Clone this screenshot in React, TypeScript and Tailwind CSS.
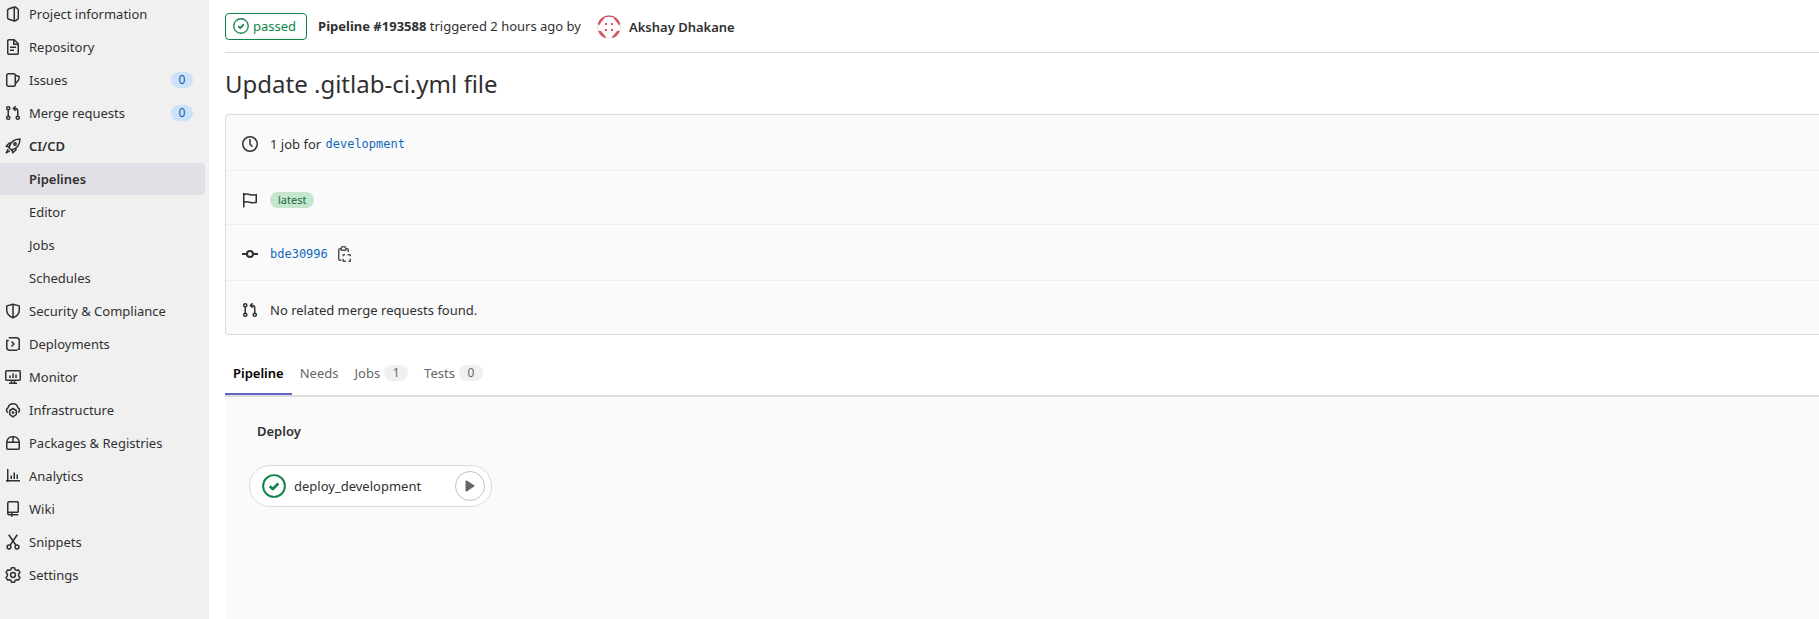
import type { ReactNode } from "react";

function Icon({ children, className = "size-4" }: { children: ReactNode; className?: string }) {
  return (
    <svg
      viewBox="0 0 16 16"
      className={`${className} shrink-0`}
      fill="none"
      stroke="currentColor"
      strokeWidth="1.5"
      strokeLinejoin="round"
      aria-hidden="true"
    >
      {children}
    </svg>
  );
}

const icons = {
  project: (
    <>
      <path d="M9.25 1v14L4 13.300a2 2 0 0 1-1.400-1.900V4.600A2 2 0 0 1 4 2.700Z" />
      <path d="M9.250 1.250h1.250l2 1.300a1.800 1.800 0 0 1 .8 1.500v7.900a1.800 1.800 0 0 1-.8 1.500l-2 1.300H9.250" />
    </>
  ),
  doc: (
    <>
      <path d="M2.75 1.75A1 1 0 0 1 3.75.75h5.5l4 4v9.5a1 1 0 0 1-1 1h-8.5a1 1 0 0 1-1-1Z" />
      <path d="M8.75 1v4.25H13M5 8.25h6M5 11.25h4" />
    </>
  ),
  issues: (
    <>
      <rect x="1.75" y="1.75" width="8.5" height="12.5" rx="1.5" />
      <path d="M10.500 3.300l3 .9a1 1 0 0 1 .7 1.200l-.7 2.600-3.100 3.800" />
    </>
  ),
  merge: (
    <>
      <circle cx="3.25" cy="3.25" r="1.6" />
      <circle cx="3.25" cy="12.75" r="1.6" />
      <circle cx="12.75" cy="12.75" r="1.6" />
      <path d="M3.250 4.750v6.500M12.750 11.250V6a2.500 2.500 0 0 0-2.500-2.500h-1.500M10.600 1.200 8.300 3.500l2.300 2.300" />
    </>
  ),
  rocket: (
    <>
      <path d="M5.2 10.800 4 9.600C5 5 8.500 1.200 15 1c-.2 6.500-4 10-8.600 11Z" />
      <circle cx="10" cy="6" r="1.200" />
      <path d="M5.600 5H4.300L1.200 8.200l3 .8M11 10.400v1.300L7.800 14.800l-.8-3M3.200 11.200l-2 3.600 3.600-2" />
    </>
  ),
  shield: <path d="M1.750 2.900 8 1.200l6.250 1.700v4.600c0 3.200-2.500 5.700-6.250 7.400-3.750-1.700-6.250-4.200-6.250-7.400ZM8 1.200v13.700" />,
  deployments: (
    <>
      <path d="M3.750 1.750h7.500a3 3 0 0 1 3 3v8.500H12.500M12.250 14.250h-7.500a3 3 0 0 1-3-3V4.500h2" />
      <path d="M6.500 5.500 9 8l-2.500 2.500" />
    </>
  ),
  monitor: (
    <>
      <rect x=".75" y="1.750" width="14.500" height="9.500" rx="1" />
      <path d="M5 6.500V9M8 4.500V9M11 5.500V9M6.500 11.500v3M9.500 11.500v3M4 14.250h8" />
    </>
  ),
  infrastructure: (
    <>
      <path d="M3 10.600a2.700 2.700 0 0 1 .1-4.900A5 5 0 0 1 12.900 5.700a2.700 2.700 0 0 1 .1 4.900" />
      <path d="m8 6.500 3.300 2v4L8 14.900l-3.300-2.400v-4Z" />
      <circle cx="8" cy="10.600" r=".6" />
    </>
  ),
  packages: (
    <path d="M1.750 7.250h12.500v6a1 1 0 0 1-1 1H2.750a1 1 0 0 1-1-1ZM1.750 7.250C2 4 4.500 1.750 7 1.750h2c2.500 0 5 2.250 5.250 5.500M8 1.750v5.500" />
  ),
  analytics: <path d="M2.750 1v13M1 12.750h14M6.250 7.500v3.500M9.250 4.500V11M12.250 6.500V11" />,
  wiki: (
    <path d="M13.250 11.250V1.750a1 1 0 0 0-1-1h-8a1.500 1.500 0 0 0-1.500 1.500v10a1.500 1.500 0 0 0 1.500 1.500h9M2.750 12.250a1.500 1.500 0 0 1 1.500-1h9M6.750 11.250v4.500" />
  ),
  snippets: (
    <>
      <path d="M3.700.7 10.800 11M12.300.7 5.200 11" />
      <circle cx="4" cy="13" r="1.900" />
      <circle cx="12" cy="13" r="1.900" />
    </>
  ),
  settings: (
    <>
      <path d="M6.500.75h3l.6 1.900 1.300.7 2-.4 1.500 2.500-1.300 1.700v1.700l1.300 1.700-1.500 2.500-2-.4-1.300.7-.6 1.900h-3l-.6-1.900-1.300-.7-2 .4-1.500-2.500 1.300-1.700V7.150L1.100 5.450l1.500-2.500 2 .4 1.300-.7Z" />
      <circle cx="8" cy="8" r="2.400" />
    </>
  ),
  clock: (
    <>
      <circle cx="8" cy="8" r="7.250" />
      <path d="M8 3.500V8l2 2.200" strokeLinecap="round" />
    </>
  ),
  flag: <path d="M1.750 1v14.500M1.750 2.500C6 .5 9 4.500 14.250 2.600v7.600C9 12.200 6 8.200 1.750 10.200" />,
  commit: (
    <g strokeWidth="2">
      <circle cx="8" cy="8" r="3" />
      <path d="M0 8h5M11 8h5" />
    </g>
  ),
  copy: (
    <>
      <path d="M5.250 2.750h-1.500a1 1 0 0 0-1 1v9.500a1 1 0 0 0 1 1H5.500M9.750 2.750h1.500a1 1 0 0 1 1 1V6M5.250 4.250V2.500a2.250 2 0 0 1 4.500 0v1.750Z" />
      <path d="M7.250 10.250v-1.500H9M11.500 8.750h2.750v1.500M14.250 12.750v2.500H12.500M10 15.250H7.250v-2.500" />
    </>
  ),
  check: (
    <>
      <circle cx="8" cy="8" r="7.250" strokeWidth="1.300" />
      <path d="m5.200 8.100 2 1.900 3.700-3.700" strokeWidth="1.800" />
    </>
  ),
};

type NavItem = { label: string; icon?: ReactNode; count?: number; state?: "open" | "current" };

const navItems: NavItem[] = [
  { label: "Project information", icon: icons.project },
  { label: "Repository", icon: icons.doc },
  { label: "Issues", icon: icons.issues, count: 0 },
  { label: "Merge requests", icon: icons.merge, count: 0 },
  { label: "CI/CD", icon: icons.rocket, state: "open" },
  { label: "Pipelines", state: "current" },
  { label: "Editor" },
  { label: "Jobs" },
  { label: "Schedules" },
  { label: "Security & Compliance", icon: icons.shield },
  { label: "Deployments", icon: icons.deployments },
  { label: "Monitor", icon: icons.monitor },
  { label: "Infrastructure", icon: icons.infrastructure },
  { label: "Packages & Registries", icon: icons.packages },
  { label: "Analytics", icon: icons.analytics },
  { label: "Wiki", icon: icons.wiki },
  { label: "Snippets", icon: icons.snippets },
  { label: "Settings", icon: icons.settings },
];

function Sidebar() {
  return (
    <nav aria-label="Project" className="w-[209px] shrink-0 bg-[#f0f0f0] pr-1">
      <ul className="-mt-0.5 flex flex-col gap-px">
        {navItems.map((item) => (
          <li key={item.label}>
            <a
              href="#"
              aria-current={item.state === "current" ? "page" : undefined}
              className={`flex h-8 items-center rounded-r pr-3 pl-[5px] ${
                item.state === "current" ? "bg-[#e1e0e6]" : ""
              } ${item.state ? "font-semibold" : ""}`}
            >
              <span className="mr-2 flex size-4 shrink-0">{item.icon && <Icon>{item.icon}</Icon>}</span>
              <span className="grow whitespace-nowrap">{item.label}</span>
              {item.count !== undefined && (
                <span className="flex h-4 w-[22px] items-center justify-center rounded-full bg-[#cbe2f9] text-xs text-[#0b5cad]">
                  {item.count}
                </span>
              )}
            </a>
          </li>
        ))}
      </ul>
    </nav>
  );
}

function Avatar() {
  return (
    <svg viewBox="0 0 24 24" className="size-6 shrink-0" aria-hidden="true">
      <clipPath id="avatar-clip">
        <circle cx="12" cy="12" r="11.500" />
      </clipPath>
      <g clipPath="url(#avatar-clip)" fill="#e05260">
        <rect width="24" height="24" fill="#fff" />
        <path d="M5 0h14l-2 2.500-5-.8-5 .8ZM0 8l1-4 4-3 3 1.500L4 7.500l-2 3ZM24 8l-1-4-4-3-3 1.500 4 5 2 3ZM0 15.500l4 .5 5 6-1 2H3ZM24 15.500l-4 .5-5 6 1 2h5Z" />
        <path d="M8 8h2v2H8zM14 8h2v2h-2zM8 14h2v2H8zM14 14h2v2h-2z" />
      </g>
      <circle cx="12" cy="12" r="11.500" fill="none" stroke="#000" strokeOpacity=".1" />
    </svg>
  );
}

function InfoRow({ icon, className, children }: { icon: ReactNode; className: string; children: ReactNode }) {
  return (
    <div className={`flex items-center border-[#f0f0f0] pl-4 ${className}`}>
      <Icon>{icon}</Icon>
      <div className="ml-3 flex items-center">{children}</div>
    </div>
  );
}

const tabs = [
  { label: "Pipeline", selected: true },
  { label: "Needs" },
  { label: "Jobs", count: 1 },
  { label: "Tests", count: 0 },
];

export default function App() {
  return (
    <div className="flex min-h-screen bg-white font-['Noto_Sans','Open_Sans',sans-serif] text-[13px] leading-5 text-[#303030]">
      <Sidebar />
      <main className="flex min-w-0 grow flex-col pl-4">
        <header className="flex h-[53px] items-center border-b border-[#dbdbdb]">
          <a
            href="#"
            className="flex h-[27px] items-center gap-1 rounded border border-[#108548] pr-[10px] pl-[7px] text-[#108548]"
          >
            <Icon>{icons.check}</Icon>
            passed
          </a>
          <p className="ml-[11px] whitespace-nowrap">
            <strong className="font-bold">Pipeline #193588</strong> triggered 2 hours ago by
          </p>
          <a href="#" className="ml-4 flex items-center gap-2 pt-0.5 font-semibold whitespace-nowrap">
            <Avatar />
            Akshay Dhakane
          </a>
        </header>

        <h1 className="mt-4 text-2xl leading-[30px]">Update .gitlab-ci.yml file</h1>

        <section className="mt-[15px] rounded-l border border-r-0 border-[#dbdbdb] bg-[#fafafa]">
          <InfoRow icon={icons.clock} className="h-14 border-b pt-0.5">
            1 job for&nbsp;
            <a href="#" className="ml-px font-['DejaVu_Sans_Mono',monospace] text-xs text-[#1068bf]">
              development
            </a>
          </InfoRow>
          <InfoRow icon={icons.flag} className="h-[54px] border-b pt-1">
            <span className="flex h-4 items-center rounded-full bg-[#c3e6cd] px-2 text-[11px] text-[#24663b]">latest</span>
          </InfoRow>
          <InfoRow icon={icons.commit} className="h-14 border-b pt-0.5">
            <a href="#" className="font-['DejaVu_Sans_Mono',monospace] text-xs text-[#1068bf]">
              bde30996
            </a>
            <button type="button" aria-label="Copy commit SHA" className="ml-2 text-[#535353]">
              <Icon>{icons.copy}</Icon>
            </button>
          </InfoRow>
          <InfoRow icon={icons.merge} className="h-[53px] pt-1">
            No related merge requests found.
          </InfoRow>
        </section>

        <div role="tablist" className="mt-[18px] flex h-11 border-b-2 border-[#dbdbdb]">
          {tabs.map((tab) => (
            <button
              key={tab.label}
              type="button"
              role="tab"
              aria-selected={tab.selected ?? false}
              className={`flex items-center gap-1 border-b-2 px-2 ${
                tab.selected ? "border-[#6666c4] font-semibold text-black" : "border-transparent text-[#666]"
              }`}
            >
              {tab.label}
              {tab.count !== undefined && (
                <span className="flex h-4 w-6 items-center justify-center rounded-full bg-[#f0f0f0] text-xs">
                  {tab.count}
                </span>
              )}
            </button>
          ))}
        </div>

        <section className="grow bg-[#fafafa] pt-6 pl-6">
          <h2 className="pl-2 font-semibold">Deploy</h2>
          <div className="mt-6 flex h-[42px] w-[243px] items-center rounded-full border border-[#dbdbdb] bg-white pr-[6px] pl-3">
            <a href="#" className="flex grow items-center gap-2">
              <Icon className="size-6 text-[#108548]">{icons.check}</Icon>
              deploy_development
            </a>
            <button
              type="button"
              aria-label="Run again"
              className="flex size-[30px] items-center justify-center rounded-full border border-[#bfbfbf] text-[#666]"
            >
              <svg viewBox="0 0 10 12" className="h-3 w-[10px]" fill="currentColor" aria-hidden="true">
                <path d="M.5 1.300c0-.7.700-1 1.300-.7l7.300 4.700c.5.300.5 1 0 1.300l-7.300 4.800c-.6.300-1.300 0-1.300-.7Z" />
              </svg>
            </button>
          </div>
        </section>
      </main>
    </div>
  );
}
